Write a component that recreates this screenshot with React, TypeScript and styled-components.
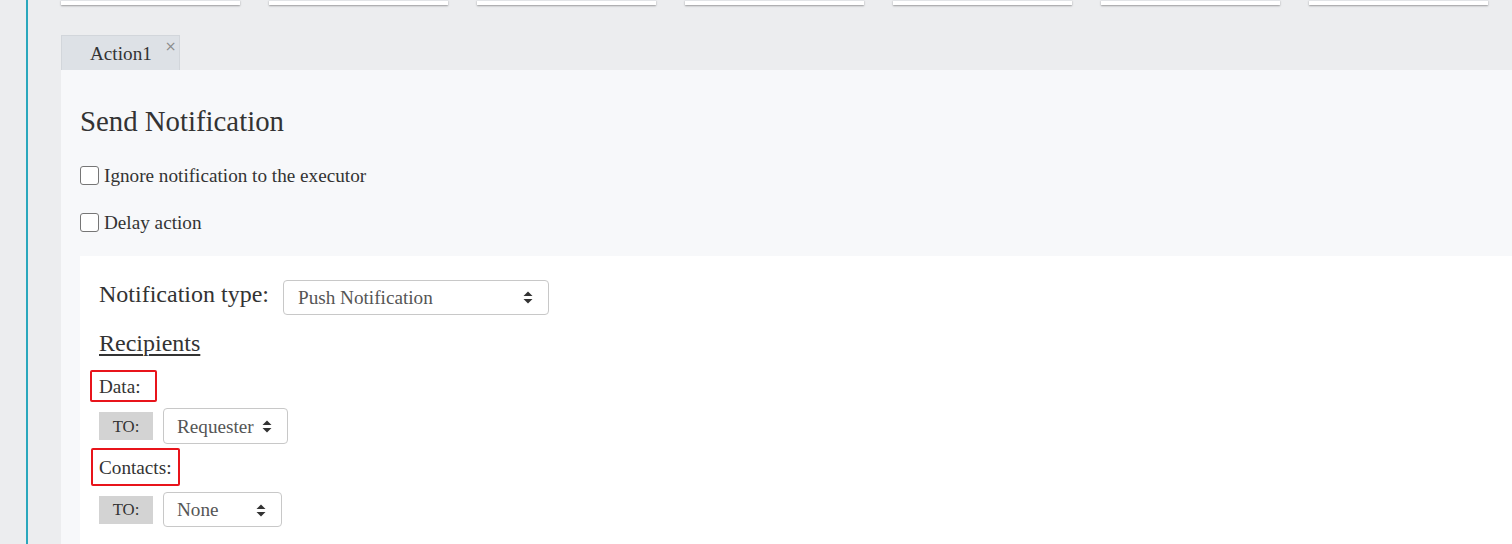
import React from "react";
import styled, { createGlobalStyle } from "styled-components";

const Global = createGlobalStyle`
  html, body { margin: 0; padding: 0; }
  body {
    background: #ecedef;
    font-family: "Liberation Serif", "Times New Roman", serif;
    color: #333;
    overflow: hidden;
  }
`;

const Page = styled.div`
  display: flex;
  height: 544px;
  width: 1512px;
  overflow: hidden;
`;

const Rail = styled.div`
  width: 26px;
  flex: none;
  border-right: 2px solid #2aa7bd;
`;

const Main = styled.div`
  flex: 1;
  min-width: 0;
  padding-left: 33px;
  display: flex;
  flex-direction: column;
`;

const CardRow = styled.div`
  display: flex;
  gap: 29px;
  height: 5px;
`;

const Card = styled.div`
  width: 179px;
  height: 4px;
  flex: none;
  background: #fff;
  border-top: 1px solid #e2e4e7;
  box-shadow: 0 1px 2px rgba(0, 0, 0, 0.35);
`;

const TabBar = styled.div`
  display: flex;
  margin-top: 30px;
`;

const Tab = styled.div`
  width: 119px;
  height: 35px;
  box-sizing: border-box;
  background: #dde1e6;
  border: 1px solid #d2d6db;
  border-bottom: none;
  display: flex;
  align-items: center;
  padding-left: 28px;
  font-size: 19.2px;
  color: #333;
`;

const TabLabel = styled.span`
  line-height: 1;
  padding-top: 2px;
`;

const Close = styled.span`
  align-self: flex-start;
  margin-top: 3px;
  margin-left: 13px;
  font-family: "DejaVu Sans", sans-serif;
  font-size: 14px;
  line-height: 1;
  color: #8a8a8a;
`;

const Panel = styled.div`
  flex: 1;
  background: #f7f8fa;
  padding-left: 19px;
  display: flex;
  flex-direction: column;
`;

const Heading = styled.h2`
  margin: 34px 0 25px;
  font-size: 28.8px;
  line-height: 34.56px;
  font-weight: normal;
  color: #333;
`;

const CheckRow = styled.label<{ $mb: number }>`
  display: flex;
  align-items: center;
  height: 23px;
  margin-bottom: ${(p) => p.$mb}px;
  font-size: 19.2px;
  line-height: 23px;
  color: #333;
`;

const Box = styled.span`
  width: 19px;
  height: 19px;
  box-sizing: border-box;
  border: 1.5px solid #767676;
  border-radius: 3px;
  background: #fff;
  margin-right: 5px;
  flex: none;
`;

const Inner = styled.div`
  flex: 1;
  background: #fff;
  padding: 24px 19px 0;
  display: flex;
  flex-direction: column;
`;

const TypeRow = styled.div`
  display: flex;
  align-items: flex-start;
  gap: 14px;
`;

const BigLabel = styled.span`
  font-size: 24px;
  line-height: 24px;
  margin-top: 2px;
  color: #333;
`;

const Select = styled.div<{ $w: number; $h: number; $pl: number }>`
  width: ${(p) => p.$w}px;
  height: ${(p) => p.$h}px;
  box-sizing: border-box;
  border: 1px solid #c8c8c8;
  border-radius: 4px;
  background: #fff;
  display: flex;
  align-items: center;
  justify-content: space-between;
  padding: 1px 15px 0 ${(p) => p.$pl}px;
  font-size: 19.2px;
  color: #555;
  flex: none;
`;

const Recipients = styled.div`
  margin-top: 14px;
  font-size: 24px;
  line-height: 28.8px;
  text-decoration: underline;
  text-underline-offset: 3px;
  text-decoration-thickness: 1.5px;
  color: #333;
`;

const GroupLabel = styled.div<{ $w: number; $h: number; $mt: number; $ml: number }>`
  width: ${(p) => p.$w}px;
  height: ${(p) => p.$h}px;
  box-sizing: border-box;
  margin-top: ${(p) => p.$mt}px;
  margin-left: ${(p) => p.$ml}px;
  border: 2px solid #e8141b;
  border-radius: 2px;
  display: flex;
  align-items: center;
  padding-left: ${(p) => 7 - (p.$ml + 9)}px;
  font-size: 19.2px;
  line-height: 23px;
  color: #333;
`;

const ToRow = styled.div<{ $mt: number }>`
  display: flex;
  align-items: center;
  gap: 10px;
  margin-top: ${(p) => p.$mt}px;
`;

const ToTag = styled.span`
  width: 54px;
  height: 28px;
  padding-top: 1px;
  box-sizing: border-box;
  background: #d3d3d3;
  display: flex;
  align-items: center;
  justify-content: center;
  font-size: 16.8px;
  color: #333;
  flex: none;
`;

const Sort = () => (
  <svg width="10" height="13" viewBox="0 0 10 13" aria-hidden>
    <path d="M5 0.5 L9.5 5 H0.5 Z" fill="#333" />
    <path d="M5 12.5 L9.5 8 H0.5 Z" fill="#333" />
  </svg>
);

export default function App() {
  const cards = Array.from({ length: 7 });
  return (
    <>
      <Global />
      <Page>
        <Rail />
        <Main>
          <CardRow>
            {cards.map((_, i) => (
              <Card key={i} />
            ))}
          </CardRow>
          <TabBar>
            <Tab>
              <TabLabel>Action1</TabLabel>
              <Close>×</Close>
            </Tab>
          </TabBar>
          <Panel>
            <Heading>Send Notification</Heading>
            <CheckRow $mb={24.5}>
              <Box />
              Ignore notification to the executor
            </CheckRow>
            <CheckRow $mb={21.5}>
              <Box />
              Delay action
            </CheckRow>
            <Inner>
              <TypeRow>
                <BigLabel>Notification type:</BigLabel>
                <Select $w={266} $h={35} $pl={14}>
                  <span>Push Notification</span>
                  <Sort />
                </Select>
              </TypeRow>
              <Recipients>Recipients</Recipients>
              <GroupLabel $w={67} $h={32} $mt={13} $ml={-9}>
                Data:
              </GroupLabel>
              <ToRow $mt={6}>
                <ToTag>TO:</ToTag>
                <Select $w={125} $h={36} $pl={13}>
                  <span>Requester</span>
                  <Sort />
                </Select>
              </ToRow>
              <GroupLabel $w={89} $h={38} $mt={4} $ml={-8}>
                Contacts:
              </GroupLabel>
              <ToRow $mt={6}>
                <ToTag>TO:</ToTag>
                <Select $w={119} $h={35} $pl={13}>
                  <span>None</span>
                  <Sort />
                </Select>
              </ToRow>
            </Inner>
          </Panel>
        </Main>
      </Page>
    </>
  );
}
